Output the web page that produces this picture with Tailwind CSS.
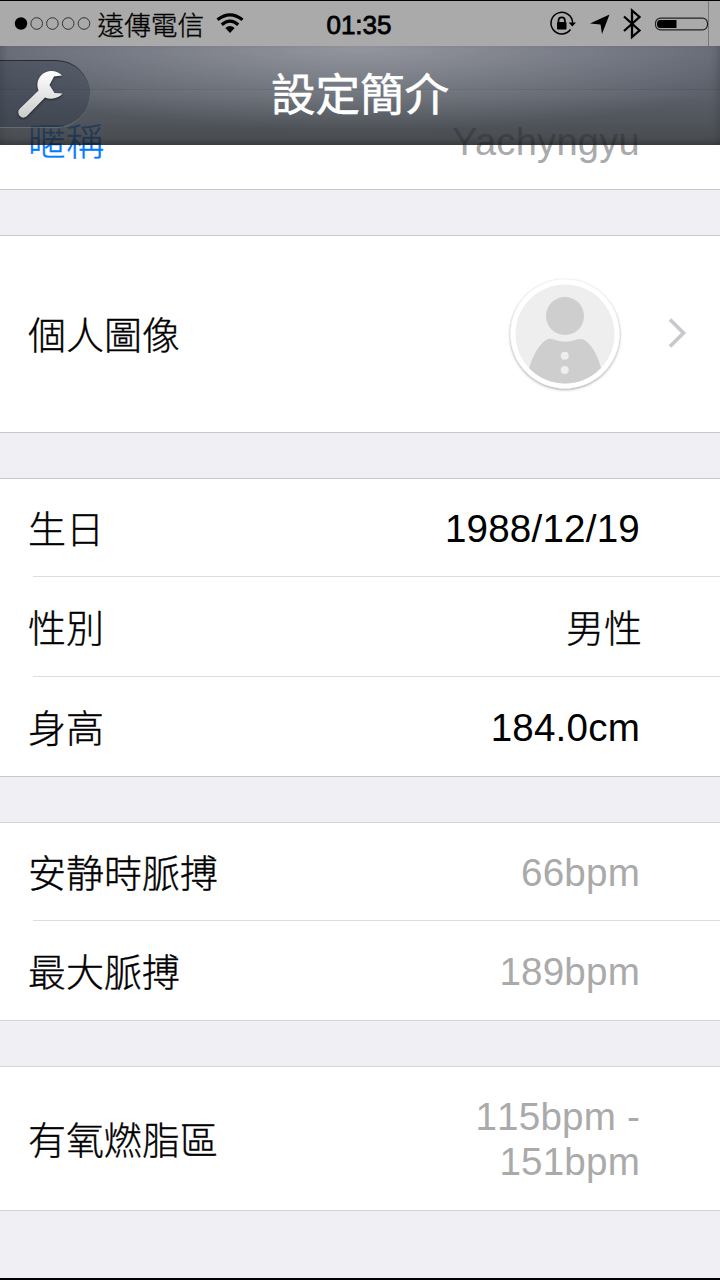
<!DOCTYPE html>
<html lang="zh-Hant">
<head>
<meta charset="utf-8">
<title>設定簡介</title>
<script src="https://cdn.jsdelivr.net/npm/@tailwindcss/browser@4"></script>
</head>
<body class="bg-[#efeff4]">
<div class="relative flex h-[1280px] w-[720px] flex-col overflow-hidden bg-[#efeff4] font-['Liberation_Sans','Noto_Sans_CJK_TC',sans-serif] text-[38px] leading-[46px] text-black">

  <!-- Status bar -->
  <div class="z-20 flex h-[46px] shrink-0 items-center border-t border-black bg-[#aaaaaa]">
    <svg class="h-[45px] w-[260px] shrink-0" viewBox="0 1 260 45">
      <circle cx="21" cy="23.500" r="6.200"/>
      <g fill="none" stroke="#333" stroke-width="1">
        <circle cx="36.700" cy="23.500" r="5.800"/><circle cx="52.400" cy="23.500" r="5.800"/><circle cx="68.200" cy="23.500" r="5.800"/><circle cx="84" cy="23.500" r="5.800"/>
      </g>
      <text x="97.500" y="34.500" font-size="26.700" font-weight="300" stroke="#000" stroke-width=".35" font-family="Noto Sans CJK TC">遠傳電信</text>
      <g fill="none" stroke="#000" stroke-width="3.200">
        <path d="M217.500 19.800Q230 9.800 242.500 19.800"/><path d="M221.800 24.700Q230 17.700 238.200 24.700"/>
      </g>
      <path d="M225.300 28Q230 24 234.700 28L230 33Z"/>
    </svg>
    <div class="w-[200px] pr-[2px] pt-[3px] text-center text-[26px] leading-[42px] [-webkit-text-stroke:0.8px_black]">01:35</div>
    <svg class="h-[45px] w-[260px] shrink-0" viewBox="460 1 260 45">
      <path d="M570.500 29.500A10.800 10.800 0 1 1 572.600 23" fill="none" stroke="#000" stroke-width="1.500"/>
      <path d="M568.600 22.500h7.400l-3.700 4z"/>
      <rect x="557" y="22" width="9.500" height="7.500" rx=".8"/>
      <path d="M558.500 22.500v-2a3.200 3.200 0 0 1 6.400 0v2" fill="none" stroke="#000" stroke-width="1.700"/>
      <path d="M609.500 14.500L602 34L600.500 24.500L590 23.500Z"/>
      <path d="M624 16.500L639.500 30.500L632 37V10.500L639.500 17L624 31" fill="none" stroke="#000" stroke-width="2.300"/>
      <rect x="655.500" y="18.200" width="52" height="11.600" rx="5" fill="none" stroke="#222" stroke-width="1.200"/>
      <path d="M660 20h16.500v8H660q-3 0-3-4t3-4z"/>
      <path d="M708.500 1v45" stroke="#777" stroke-width="1"/>
    </svg>
  </div>

  <main class="flex flex-col">
    <div class="h-[44px] border-b border-[#c8c7cc]"></div>
    <section class="h-[100px] border-b border-[#c8c7cc] bg-white">
      <div class="flex h-[99px] items-center justify-between pl-7 pr-20 pt-[5px]">
        <span class="font-light text-[#007aff] [-webkit-text-stroke:0.35px_#007aff]">暱稱</span><span class="tracking-[0.3px] text-[#aaaaaa]">Yachyngyu</span>
      </div>
    </section>

    <section class="mt-[45px] flex h-[198px] items-center border-y border-[#c8c7cc] bg-white pl-7 pr-[32px]">
      <span class="flex-1 pt-1 font-light [-webkit-text-stroke:0.35px]">個人圖像</span>
      <svg class="mt-[2px] h-[124px] w-[124px]" viewBox="503 273 124 124">
        <defs>
          <clipPath id="face"><circle cx="565" cy="334" r="49.500"/></clipPath>
          <filter id="sh" x="-20%" y="-20%" width="140%" height="140%"><feDropShadow dx="0" dy="1" stdDeviation="1.600" flood-opacity=".42"/></filter>
        </defs>
        <circle cx="565" cy="334" r="54.500" fill="#fff" filter="url(#sh)"/>
        <circle cx="565" cy="334" r="49.500" fill="#eee"/>
        <g clip-path="url(#face)" fill="#cecece">
          <circle cx="565" cy="316" r="19"/>
          <path d="M528 372C532 356 540 343 547 339.500Q550 338 555 340Q565 343.500 575 340Q581 338 585 340.500C592 345 599 357 602 372V390H528Z"/>
        </g>
        <g fill="#eee"><circle cx="564.700" cy="355.700" r="4"/><circle cx="564.700" cy="370" r="4"/></g>
      </svg>
      <svg class="ml-[39px] h-8 w-[22px]" viewBox="666 318 22 32"><path d="M670 319.500L683.500 333L670 346.500" fill="none" stroke="#c7c7cc" stroke-width="3.600"/></svg>
    </section>

    <section class="mt-[45px] border-y border-[#c8c7cc] bg-white">
      <div class="flex h-[97px] items-center justify-between pl-7 pr-20 pt-[2px]"><span class="pt-[2px] font-light [-webkit-text-stroke:0.35px]">生日</span><span class="text-[38.6px] tracking-[0.2px] [font-kerning:none]">1988/12/19</span></div>
      <div class="ml-[33px] h-px bg-[#dddddf]"></div>
      <div class="flex h-[99px] items-center justify-between pl-7 pr-[78px] pt-[2px]"><span class="pt-[2px] font-light [-webkit-text-stroke:0.35px]">性別</span><span class="pt-[2px] font-light [-webkit-text-stroke:0.35px]">男性</span></div>
      <div class="ml-[33px] h-px bg-[#dddddf]"></div>
      <div class="flex h-[99px] items-center justify-between pl-7 pr-20 pt-[2px]"><span class="pt-[2px] font-light [-webkit-text-stroke:0.35px]">身高</span><span class="text-[38.6px] tracking-[0.2px] [font-kerning:none]">184.0cm</span></div>
    </section>

    <section class="mt-[45px] border-y border-[#d4d4d8] bg-white">
      <div class="flex h-[97px] items-center justify-between pl-7 pr-20 pt-[2px]"><span class="pt-[2px] font-light [-webkit-text-stroke:0.35px]">安静時脈搏</span><span class="text-[38.6px] tracking-[0.2px] text-[#aaaaaa] [font-kerning:none]">66bpm</span></div>
      <div class="ml-[33px] h-px bg-[#dddddf]"></div>
      <div class="flex h-[99px] items-center justify-between pl-7 pr-20 pt-[2px]"><span class="pt-[2px] font-light [-webkit-text-stroke:0.35px]">最大脈搏</span><span class="text-[38.6px] tracking-[0.2px] text-[#aaaaaa] [font-kerning:none]">189bpm</span></div>
    </section>

    <section class="mt-[45px] border-y border-[#d4d4d8] bg-white">
      <div class="flex h-[143px] items-center justify-between pl-7 pr-20"><span class="pt-[4px] font-light [-webkit-text-stroke:0.35px]">有氧燃脂區</span><span class="text-right text-[38.6px] leading-[45px] tracking-[0.2px] text-[#aaaaaa] [font-kerning:none]">115bpm -<br>151bpm</span></div>
    </section>
  </main>

  <!-- Translucent title bar over the list -->
  <header class="absolute left-0 top-[46px] z-10 h-[99px] w-[720px]">
    <div class="absolute inset-0 bg-[radial-gradient(ellipse_60%_85%_at_50%_0%,rgba(255,255,255,.33),rgba(255,255,255,0)),linear-gradient(#464b58,#3a404b_50%,#262b31_92%,#15171a)] opacity-[.83] shadow-[inset_8px_0_8px_-6px_rgba(0,0,0,.3),inset_-8px_0_8px_-6px_rgba(0,0,0,.3)]"></div>
    <div class="absolute left-0 top-[14px] h-[68px] w-[90px] rounded-r-full border-b border-t border-b-white/20 border-t-black/50 bg-[#2c3845]/40"></div>
    <svg class="absolute left-[14px] top-[20px] h-[58px] w-[56px]" viewBox="14 66 56 58">
      <defs><linearGradient id="w" x1="0" y1="0" x2="0" y2="1"><stop offset="0" stop-color="#fff"/><stop offset="1" stop-color="#ccc"/></linearGradient></defs>
      <path d="M62 75.500C57 69.500 46 69.500 41 75.500C37 80 36.500 86 38.500 90.500L20 108.500C15.500 113 21 120.500 26.500 116.500L45 97.500C51 100 59 98.500 62.500 93.500L54.500 93L49.500 85L54 76.500Z" fill="url(#w)" style="filter:drop-shadow(0 1px 1px rgba(0,0,0,.6))"/>
    </svg>
    <h1 class="relative flex h-[99px] items-center justify-center text-[44.5px] font-normal text-white [-webkit-text-stroke:0.6px_white]">設定簡介</h1>
  </header>

  <div class="mt-auto h-[2px] bg-black"></div>
</div>
</body>
</html>
